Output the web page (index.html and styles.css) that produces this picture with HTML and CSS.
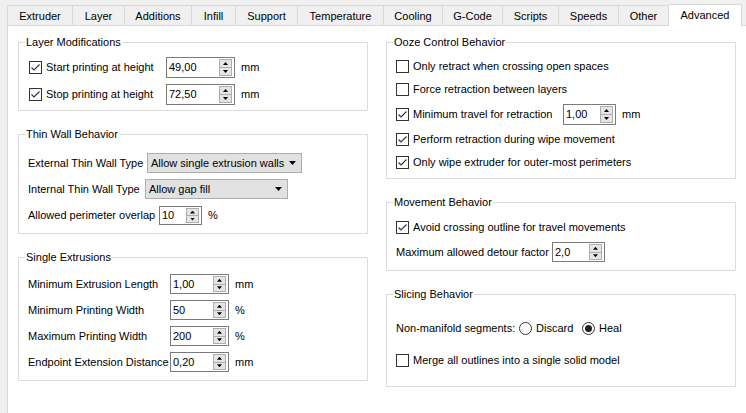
FILE: index.html
```html
<!DOCTYPE html>
<html>
<head>
<meta charset="utf-8">
<title>Advanced settings</title>
<link rel="stylesheet" href="styles.css">
</head>
<body>
<div class="tabs">
  <div class="tab">Extruder</div>
  <div class="tab">Layer</div>
  <div class="tab">Additions</div>
  <div class="tab">Infill</div>
  <div class="tab">Support</div>
  <div class="tab">Temperature</div>
  <div class="tab">Cooling</div>
  <div class="tab">G-Code</div>
  <div class="tab">Scripts</div>
  <div class="tab">Speeds</div>
  <div class="tab">Other</div>
  <div class="tab active">Advanced</div>
</div>
<div class="pane">
  <div class="col">
    <section class="group g-layer">
      <span class="group-title">Layer Modifications</span>
      <div class="rows rows-layer">
        <div class="row h21">
          <label class="chk slot-137"><span class="cb"><svg viewBox="0 0 11 11" width="11" height="11"><polyline points="1.5,5.5 4,8 9.5,2.5" fill="none" stroke="#333" stroke-width="1.1"/></svg></span>Start printing at height</label>
          <span class="spin w69"><span class="spin-val">49,00</span><span class="spin-btns"><span class="up"></span><span class="down"></span></span></span>
          <span class="unit">mm</span>
        </div>
        <div class="row h21">
          <label class="chk slot-137"><span class="cb"><svg viewBox="0 0 11 11" width="11" height="11"><polyline points="1.5,5.5 4,8 9.5,2.5" fill="none" stroke="#333" stroke-width="1.1"/></svg></span>Stop printing at height</label>
          <span class="spin w69"><span class="spin-val">72,50</span><span class="spin-btns"><span class="up"></span><span class="down"></span></span></span>
          <span class="unit">mm</span>
        </div>
      </div>
    </section>
    <section class="group g-thin">
      <span class="group-title">Thin Wall Behavior</span>
      <div class="rows rows-thin">
        <div class="row h20">
          <span class="lbl slot-119">External Thin Wall Type</span>
          <span class="combo w155"><span class="combo-val">Allow single extrusion walls</span><span class="combo-arrow"></span></span>
        </div>
        <div class="row h20">
          <span class="lbl slot-117">Internal Thin Wall Type</span>
          <span class="combo w143"><span class="combo-val">Allow gap fill</span><span class="combo-arrow"></span></span>
        </div>
        <div class="row h19 mt1">
          <span class="lbl slot-131">Allowed perimeter overlap</span>
          <span class="spin w43 h19"><span class="spin-val">10</span><span class="spin-btns"><span class="up"></span><span class="down"></span></span></span>
          <span class="unit">%</span>
        </div>
      </div>
    </section>
    <section class="group g-single">
      <span class="group-title">Single Extrusions</span>
      <div class="rows rows-single">
        <div class="row h20">
          <span class="lbl slot-142">Minimum Extrusion Length</span>
          <span class="spin w59 h20"><span class="spin-val">1,00</span><span class="spin-btns"><span class="up"></span><span class="down"></span></span></span>
          <span class="unit">mm</span>
        </div>
        <div class="row h20">
          <span class="lbl slot-142">Minimum Printing Width</span>
          <span class="spin w59 h20"><span class="spin-val">50</span><span class="spin-btns"><span class="up"></span><span class="down"></span></span></span>
          <span class="unit">%</span>
        </div>
        <div class="row h20">
          <span class="lbl slot-142">Maximum Printing Width</span>
          <span class="spin w59 h20"><span class="spin-val">200</span><span class="spin-btns"><span class="up"></span><span class="down"></span></span></span>
          <span class="unit">%</span>
        </div>
        <div class="row h20">
          <span class="lbl slot-142">Endpoint Extension Distance</span>
          <span class="spin w59 h20"><span class="spin-val">0,20</span><span class="spin-btns"><span class="up"></span><span class="down"></span></span></span>
          <span class="unit">mm</span>
        </div>
      </div>
    </section>
  </div>
  <div class="col">
    <section class="group g-ooze">
      <span class="group-title">Ooze Control Behavior</span>
      <div class="rows rows-ooze">
        <div class="row h17">
          <label class="chk"><span class="cb"></span>Only retract when crossing open spaces</label>
        </div>
        <div class="row h17">
          <label class="chk"><span class="cb"></span>Force retraction between layers</label>
        </div>
        <div class="row h21">
          <label class="chk slot-167"><span class="cb"><svg viewBox="0 0 11 11" width="11" height="11"><polyline points="1.5,5.5 4,8 9.5,2.5" fill="none" stroke="#333" stroke-width="1.1"/></svg></span>Minimum travel for retraction</label>
          <span class="spin w53 h21"><span class="spin-val">1,00</span><span class="spin-btns"><span class="up"></span><span class="down"></span></span></span>
          <span class="unit">mm</span>
        </div>
        <div class="row h17">
          <label class="chk"><span class="cb"><svg viewBox="0 0 11 11" width="11" height="11"><polyline points="1.5,5.5 4,8 9.5,2.5" fill="none" stroke="#333" stroke-width="1.1"/></svg></span>Perform retraction during wipe movement</label>
        </div>
        <div class="row h17">
          <label class="chk"><span class="cb"><svg viewBox="0 0 11 11" width="11" height="11"><polyline points="1.5,5.5 4,8 9.5,2.5" fill="none" stroke="#333" stroke-width="1.1"/></svg></span>Only wipe extruder for outer-most perimeters</label>
        </div>
      </div>
    </section>
    <section class="group g-move">
      <span class="group-title">Movement Behavior</span>
      <div class="rows rows-move">
        <div class="row h17">
          <label class="chk"><span class="cb"><svg viewBox="0 0 11 11" width="11" height="11"><polyline points="1.5,5.5 4,8 9.5,2.5" fill="none" stroke="#333" stroke-width="1.1"/></svg></span>Avoid crossing outline for travel movements</label>
        </div>
        <div class="row h20">
          <span class="lbl slot-156">Maximum allowed detour factor</span>
          <span class="spin w53 h20"><span class="spin-val">2,0</span><span class="spin-btns"><span class="up"></span><span class="down"></span></span></span>
        </div>
      </div>
    </section>
    <section class="group g-slice">
      <span class="group-title">Slicing Behavior</span>
      <div class="rows rows-slice">
        <div class="row h17">
          <span class="lbl slot-123">Non-manifold segments:</span>
          <label class="radio slot-63"><span class="rb"></span>Discard</label>
          <label class="radio"><span class="rb on"></span>Heal</label>
        </div>
        <div class="row h17">
          <label class="chk"><span class="cb"></span>Merge all outlines into a single solid model</label>
        </div>
      </div>
    </section>
  </div>
</div>
</body>
</html>
```

FILE: styles.css
```css
* { box-sizing: border-box; }
html, body { margin: 0; padding: 0; }
body {
  background: #f0f0f0;
  font-family: "Liberation Sans", Arial, sans-serif;
  font-size: 11px;
  color: #000;
  width: 746px;
  height: 413px;
  overflow: hidden;
}

/* Tabs */
.tabs {
  display: flex;
  align-items: flex-end;
  height: 25px;
  padding-left: 7px;
}
.tab {
  flex: none;
  height: 20px;
  border: 1px solid #d9d9d9;
  border-right: none;
  border-bottom: none;
  background: #f0f0f0;
  text-align: center;
  line-height: 20px;
  white-space: nowrap;
}
.tab:nth-child(1) { width: 65px; }
.tab:nth-child(2) { width: 52px; }
.tab:nth-child(3) { width: 67px; }
.tab:nth-child(4) { width: 44px; }
.tab:nth-child(5) { width: 62px; }
.tab:nth-child(6) { width: 86px; }
.tab:nth-child(7) { width: 59px; }
.tab:nth-child(8) { width: 60px; }
.tab:nth-child(9) { width: 56px; }
.tab:nth-child(10) { width: 60px; }
.tab:nth-child(11) { width: 50px; }
.tab.active {
  width: 74px;
  height: 22px;
  background: #fff;
  border-right: 1px solid #d9d9d9;
  margin-bottom: -1px;
  position: relative;
  z-index: 1;
  line-height: 20px;
}

/* Pane */
.pane {
  background: #fff;
  border: 1px solid #d9d9d9;
  margin-left: 7px;
  margin-right: -4px;
  height: 400px;
  display: flex;
  gap: 18px;
  padding: 16px 0 0 10px;
}
.col {
  width: 350px;
  flex: none;
  display: flex;
  flex-direction: column;
  gap: 23px;
}

/* Group boxes */
.group {
  position: relative;
  border: 1px solid #dcdcdc;
  flex: none;
}
.group-title {
  position: absolute;
  top: -7px;
  left: 6px;
  padding: 0 1px;
  background: #fff;
  line-height: 13px;
  white-space: nowrap;
}
.g-layer { height: 69px; }
.g-thin { height: 100px; }
.g-single { height: 124px; }
.g-ooze { height: 137px; }
.g-move { height: 69px; }
.g-slice { height: 93px; }

.rows { display: flex; flex-direction: column; gap: 6px; }
.rows-layer { padding: 14px 0 0 10px; }
.rows-thin { padding: 18px 0 0 9px; }
.rows-single { padding: 16px 0 0 9px; }
.rows-ooze { padding: 15px 0 0 9px; }
.rows-move { padding: 16px 0 0 9px; }
.rows-slice { padding: 25px 0 0 9px; gap: 15px; }

.row {
  display: flex;
  align-items: center;
  white-space: nowrap;
  line-height: 13px;
}
.h17 { height: 17px; }
.h19 { height: 19px; }
.h20 { height: 20px; }
.h21 { height: 21px; }
.mt1 { margin-top: 1px; }

.slot-119 { width: 119px; }
.slot-117 { width: 117px; }
.slot-131 { width: 131px; }
.slot-137 { width: 137px; }
.slot-142 { width: 142px; }
.slot-156 { width: 156px; }
.slot-167 { width: 167px; }
.slot-123 { width: 123px; }
.slot-63 { width: 63px; }
.lbl, .chk, .radio { flex: none; display: flex; align-items: center; }

/* Checkbox */
.cb {
  width: 13px;
  height: 13px;
  border: 1px solid #333;
  background: #fff;
  flex: none;
  margin-right: 4px;
  display: flex;
  align-items: center;
  justify-content: center;
}
.cb svg { display: block; }

/* Radio */
.rb {
  width: 13px;
  height: 13px;
  border: 1px solid #333;
  border-radius: 50%;
  background: #fff;
  flex: none;
  margin-right: 4px;
  display: flex;
  align-items: center;
  justify-content: center;
}
.rb.on::after {
  content: "";
  width: 7px;
  height: 7px;
  border-radius: 50%;
  background: #222;
}

/* Spin box */
.spin {
  flex: none;
  display: flex;
  align-items: stretch;
  border: 1px solid #7a7a7a;
  background: #fff;
  height: 21px;
}
.spin.h20 { height: 20px; }
.spin.h19 { height: 19px; }
.w69 { width: 69px; }
.w59 { width: 59px; }
.w53 { width: 53px; }
.w43 { width: 43px; }
.spin-val {
  flex: 1;
  padding-left: 2px;
  display: flex;
  align-items: center;
}
.spin-btns {
  flex: none;
  width: 13px;
  margin: 1px 2px 1px 0;
  border: 1px solid #adadad;
  background: #e5e5e5;
  display: flex;
  flex-direction: column;
}
.spin-btns span {
  flex: 1;
  display: flex;
  align-items: center;
  justify-content: center;
}
.spin-btns .up { border-bottom: 1px solid #adadad; }
.spin-btns .up::after,
.spin-btns .down::after {
  content: "";
  width: 5px;
  height: 3px;
  background: #000;
}
.spin-btns .up::after { clip-path: polygon(50% 0, 100% 100%, 0 100%); }
.spin-btns .down::after { clip-path: polygon(0 0, 100% 0, 50% 100%); }

.unit { margin-left: 6px; }

/* Combo box */
.combo {
  flex: none;
  display: flex;
  align-items: center;
  height: 20px;
  border: 1px solid #adadad;
  background: #e1e1e1;
  padding: 0 5px 0 3px;
}
.w155 { width: 155px; }
.w143 { width: 143px; }
.combo-val { flex: 1; }
.combo-arrow {
  width: 7px;
  height: 4px;
  background: #000;
  clip-path: polygon(0 0, 100% 0, 50% 100%);
}
```
